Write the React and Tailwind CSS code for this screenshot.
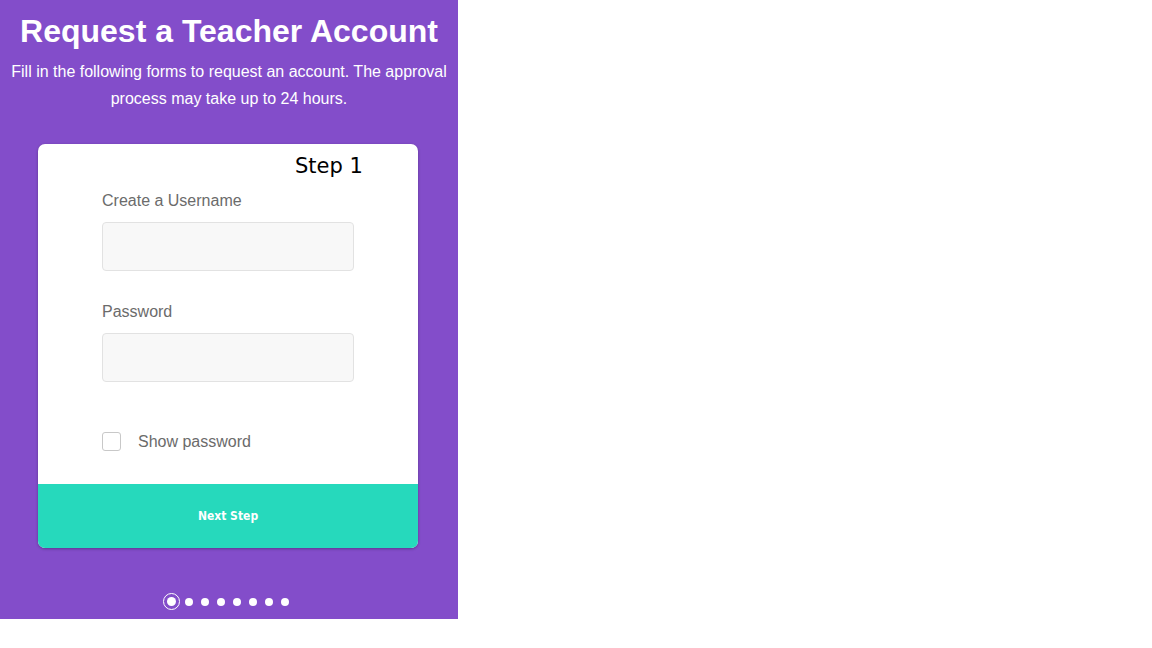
export default function App() {
  const dots = [0, 1, 2, 3, 4, 5, 6, 7];
  return (
    <div className="w-[1152px] h-[648px] bg-white" style={{ fontFamily: '"Liberation Sans", Arial, sans-serif' }}>
      <div className="w-[458px] h-[619px] bg-[#834dca] flex flex-col items-center">
        <h1 className="mt-[12px] text-[32px] leading-[38px] font-bold text-white text-center">Request a Teacher Account</h1>
        <p className="mt-[8px] text-[16px] leading-[27px] text-white text-center">
          Fill in the following forms to request an account. The approval
          <br />
          process may take up to 24 hours.
        </p>

        <div className="mt-[32px] -ml-[2px] w-[380px] h-[404px] bg-white rounded-[7px] shadow-[0_1px_3px_rgba(0,0,0,0.3)] overflow-hidden flex flex-col">
          <div className="h-[40px] pl-[257px] pt-[7px] text-[21px] leading-[30px] text-black" style={{ fontFamily: '"DejaVu Sans", Verdana, sans-serif' }}>
            Step 1
          </div>
          <div className="flex-1 pl-[64px] text-[#6b6b6b] text-[16px]">
            <label className="block mt-[7px] leading-[20px]">Create a Username</label>
            <input className="mt-[11px] block w-[252px] h-[49px] bg-[#f8f8f8] border border-[#e2e2e2] rounded-[4px] outline-none" />
            <label className="block mt-[31px] leading-[20px]">Password</label>
            <input type="password" className="mt-[11px] block w-[252px] h-[49px] bg-[#f8f8f8] border border-[#e2e2e2] rounded-[4px] outline-none" />
            <div className="mt-[50px] flex items-center h-[19px]">
              <span className="w-[19px] h-[19px] border border-[#c8c8c8] rounded-[3px] bg-white" />
              <span className="ml-[17px] leading-[20px]">Show password</span>
            </div>
          </div>
          <button className="h-[64px] w-full bg-[#26d9bc] text-white text-[12px] font-bold" style={{ fontFamily: '"DejaVu Sans Condensed", Tahoma, sans-serif' }}>
            Next Step
          </button>
        </div>

        <div className="mt-[45px] flex items-center gap-[8px] -ml-[7px]">
          {dots.map((i) =>
            i === 0 ? (
              <span key={i} className="w-[17px] h-[17px] -mr-[3px] rounded-full border border-white flex items-center justify-center">
                <span className="w-[9px] h-[9px] rounded-full bg-white" />
              </span>
            ) : (
              <span key={i} className="w-[8px] h-[8px] rounded-full bg-white" />
            )
          )}
        </div>
      </div>
    </div>
  );
}
